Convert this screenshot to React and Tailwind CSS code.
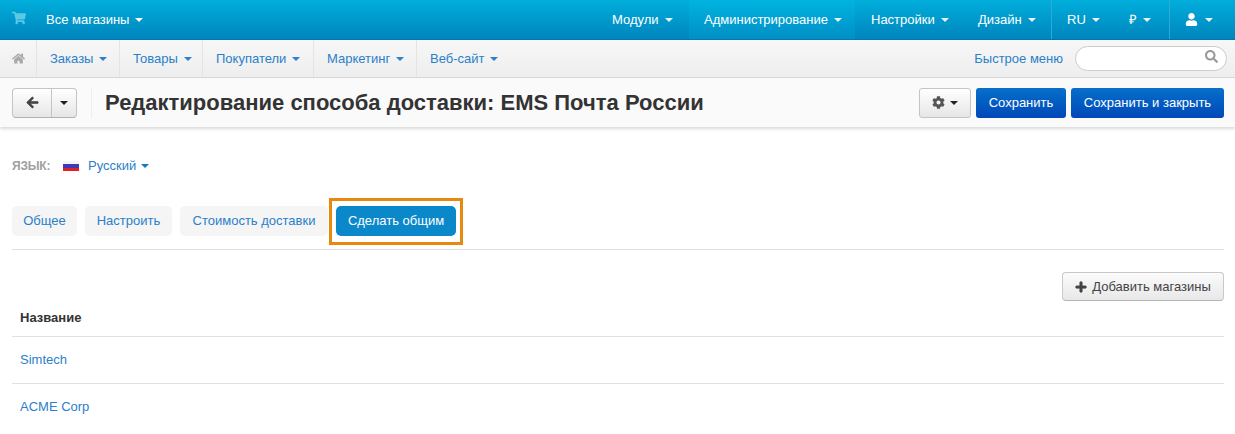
import React from "react";
import { FaShoppingCart, FaHome, FaArrowLeft, FaCog, FaUser, FaPlus, FaSearch } from "react-icons/fa";

const Caret = ({ className = "" }) => (
  <span className={"inline-block w-0 h-0 border-x-[4px] border-x-transparent border-t-[4px] " + className} />
);

const TopItem = ({ children, active, w, border }) => (
  <div
    className={
      "h-full flex items-center gap-[6px] text-white text-[13px] " +
      w + " " +
      (active ? "bg-gradient-to-b from-[#00b4e0] to-[#008fc6] " : "") +
      (border ? "border-l border-[#2fa9d6] " : "")
    }
  >
    {children}
    <Caret className="border-t-white opacity-90" />
  </div>
);

const SubItem = ({ children, w }) => (
  <div className={"h-full flex items-center gap-[6px] pl-[13px] border-l border-[#e4e4e4] text-[13px] text-[#2b80c9] " + w}>
    {children}
    <Caret className="border-t-[#2b80c9]" />
  </div>
);

const Tab = ({ children, w }) => (
  <div className={"h-[30px] flex items-center justify-center rounded-[5px] bg-[#f5f5f5] text-[13px] text-[#2b80c9] " + w}>{children}</div>
);

export default function App() {
  return (
    <div className="w-[1235px] h-[434px] overflow-hidden bg-white text-[13px] text-[#333] font-['Liberation_Sans',Arial,sans-serif]">
      <div className="h-[40px] flex items-center bg-gradient-to-b from-[#00aedb] to-[#0085bd] border-b border-[#0079ad]">
        <div className="w-[46px] pl-[12px] pb-[4px] text-[#5cc8e6]"><FaShoppingCart size={14} /></div>
        <div className="flex items-center gap-[6px] text-white text-[13px]">Все магазины <Caret className="border-t-white" /></div>
        <div className="ml-auto h-full flex">
          <TopItem w="w-[90px] pl-[13px]">Модули</TopItem>
          <TopItem w="w-[166px] pl-[15px]" active>Администрирование</TopItem>
          <TopItem w="w-[107px] pl-[16px]">Настройки</TopItem>
          <TopItem w="w-[89px] pl-[16px]">Дизайн</TopItem>
          <TopItem w="w-[62px] pl-[15px]" border>RU</TopItem>
          <TopItem w="w-[56px] pl-[16px]">₽</TopItem>
          <div className="w-[66px] h-full flex items-center pl-[15px] gap-[7px] border-l border-[#2fa9d6] text-white">
            <FaUser size={13} />
            <Caret className="border-t-white opacity-90" />
          </div>
        </div>
      </div>

      <div className="h-[38px] flex items-center bg-gradient-to-b from-[#f7f7f7] to-[#eeeeee] border-b border-[#d9d9d9]">
        <div className="w-[36px] flex justify-center text-[#a8a8a8]"><FaHome size={13} /></div>
        <div className="h-full flex">
          <SubItem w="w-[83px]">Заказы</SubItem>
          <SubItem w="w-[83px]">Товары</SubItem>
          <SubItem w="w-[111px]">Покупатели</SubItem>
          <SubItem w="w-[103px]">Маркетинг</SubItem>
          <SubItem w="w-[90px]">Веб-сайт</SubItem>
        </div>
        <div className="ml-auto mr-[8px] flex items-center gap-[12px]">
          <span className="text-[#2b80c9]">Быстрое меню</span>
          <div className="relative w-[152px] h-[25px] rounded-full bg-white border border-[#ccc]">
            <FaSearch size={13} className="absolute right-[8px] top-[3px] text-[#999]" />
          </div>
        </div>
      </div>

      <div className="h-[49px] flex items-center pl-[12px] pr-[11px] bg-[#fafafa] shadow-[0_2px_3px_rgba(0,0,0,0.15)] relative">
        <div className="flex h-[30px] rounded-[4px] border border-[#c4c4c4] border-b-[#b0b0b0] bg-gradient-to-b from-white to-[#e6e6e6]">
          <div className="w-[39px] flex items-center justify-center border-r border-[#c4c4c4] text-[#444]"><FaArrowLeft size={13} stroke="currentColor" strokeWidth={24} /></div>
          <div className="w-[24px] flex items-center justify-center"><Caret className="border-t-[#222]" /></div>
        </div>
        <div className="ml-[14px] h-[30px] border-l border-[#eee]" />
        <h1 className="ml-[13px] text-[22px] font-bold text-[#333]">Редактирование способа доставки: EMS Почта России</h1>
        <div className="ml-auto flex items-center gap-[5px]">
          <div className="w-[52px] h-[30px] flex items-center justify-center gap-[5px] rounded-[3px] border border-[#c4c4c4] bg-gradient-to-b from-white to-[#e6e6e6] text-[#555]">
            <FaCog size={13} />
            <Caret className="border-t-[#222]" />
          </div>
          <div className="w-[90px] h-[30px] flex items-center justify-center rounded-[3px] bg-gradient-to-b from-[#0a6fc9] to-[#0347b9] text-white">Сохранить</div>
          <div className="w-[153px] h-[30px] flex items-center justify-center rounded-[3px] bg-gradient-to-b from-[#0a6fc9] to-[#0347b9] text-white">Сохранить и закрыть</div>
        </div>
      </div>

      <div className="pl-[12px] pr-[11px]">
        <div className="flex items-center mt-[31px] h-[16px]">
          <span className="w-[51px] text-[12px] tracking-[-0.2px] font-bold text-[#a0a0a0]">ЯЗЫК:</span>
          <span className="w-[16px] h-[10px] bg-[linear-gradient(to_bottom,#f4f4f4_0%,#f4f4f4_33%,#3b3bb8_33%,#3b3bb8_66%,#e01f2a_66%)]" />
          <span className="ml-[9px] text-[#2b80c9]">Русский</span>
          <Caret className="ml-[5px] border-t-[#0f7cc0]" />
        </div>
        <div className="mt-[30px] h-[46px] flex items-start border-b border-[#dfdfdf]">
          <div className="mt-[2px] flex gap-[8px]">
            <Tab w="w-[65px]">Общее</Tab>
            <Tab w="w-[87px]">Настроить</Tab>
            <Tab w="w-[148px]">Стоимость доставки</Tab>
          </div>
          <div className="relative ml-[8px] mt-[2px] w-[120px] h-[30px] flex items-center justify-center rounded-[5px] bg-[#0a88ca] text-white">
            Сделать общим
            <div className="absolute -left-[7px] -right-[7px] -top-[8px] -bottom-[9px] border-[3px] border-[#e58a0e]" />
          </div>
        </div>
        <div className="flex justify-end mt-[22px]">
          <div className="w-[162px] h-[29px] flex items-center justify-center gap-[5px] rounded-[4px] border border-[#c8c8c8] border-b-[#b5b5b5] bg-gradient-to-b from-[#fbfbfb] to-[#e8e8e8] text-[13px] text-[#444]">
            <FaPlus size={12} stroke="currentColor" strokeWidth={32} /> Добавить магазины
          </div>
        </div>
        <div className="h-[36px] flex items-center pl-[8px] pb-[2px] font-bold text-[#333] border-b border-[#dfdfdf]">Название</div>
        <div className="h-[47px] flex items-center pl-[8px] text-[#2b80c9] border-b border-[#dfdfdf]">Simtech</div>
        <div className="h-[46px] flex items-center pl-[8px] text-[#2b80c9]">ACME Corp</div>
      </div>
    </div>
  );
}
